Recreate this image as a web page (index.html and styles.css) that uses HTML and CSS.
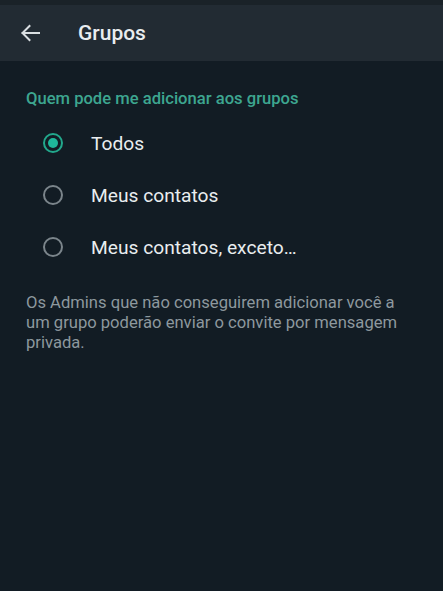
FILE: index.html
```html
<!DOCTYPE html>
<html lang="pt-BR">
<head>
  <meta charset="UTF-8">
  <meta name="viewport" content="width=device-width, initial-scale=1.0">
  <title>Grupos</title>
  <link rel="stylesheet" href="styles.css">
</head>
<body>
  <div class="statusbar"></div>

  <header class="appbar">
    <button class="back" aria-label="Voltar">
      <svg width="20" height="18" viewBox="0 0 20 18">
        <path d="M19 9H2.5M9.5 2L2.5 9l7 7" fill="none" stroke="#d9dee1" stroke-width="2" stroke-linecap="square"/>
      </svg>
    </button>
    <h1>Grupos</h1>
  </header>

  <main class="content">
    <h2 class="section-title">Quem pode me adicionar aos grupos</h2>

    <div class="options">
      <label class="option">
        <span class="radio checked"></span>
        <span class="label">Todos</span>
      </label>
      <label class="option">
        <span class="radio"></span>
        <span class="label">Meus contatos</span>
      </label>
      <label class="option">
        <span class="radio"></span>
        <span class="label">Meus contatos, exceto…</span>
      </label>
    </div>

    <p class="hint">Os Admins que não conseguirem adicionar você a um grupo poderão enviar o convite por mensagem privada.</p>
  </main>
</body>
</html>
```

FILE: styles.css
```css
/* Basic Reset */
* {
  margin: 0;
  padding: 0;
  box-sizing: border-box;
  font-family: Roboto, "Noto Sans", Arial, sans-serif;
}

body {
  min-height: 100vh;
  background: #121c24;
  color: #e9edef;
}

.statusbar {
  height: 5px;
  background: #1a2228;
}

/* Top bar */
.appbar {
  display: flex;
  align-items: center;
  height: 56px;
  padding-left: 20px;
  background: #222b33;
}

.back {
  display: flex;
  border: none;
  background: none;
  cursor: pointer;
}

.appbar h1 {
  margin-left: 38px;
  font-size: 21px;
  font-weight: 500;
  color: #e9edef;
}

/* Settings list */
.content {
  padding: 28px 26px 0;
}

.section-title {
  font-size: 16.6px;
  font-weight: 500;
  line-height: 20px;
  color: #3da690;
}

.options {
  margin-top: 8px;
}

.option {
  display: flex;
  align-items: center;
  height: 52px;
  cursor: pointer;
}

.radio {
  width: 20px;
  height: 20px;
  margin-left: 17px;
  border: 2px solid #7b858b;
  border-radius: 50%;
  display: flex;
  align-items: center;
  justify-content: center;
}

.radio.checked {
  border-color: #22a88c;
}

.radio.checked::after {
  content: "";
  width: 10px;
  height: 10px;
  border-radius: 50%;
  background: #1fb89b;
}

.label {
  margin-left: 28px;
  font-size: 19.2px;
  color: #e9edef;
}

.hint {
  margin-top: 20px;
  font-size: 16.6px;
  line-height: 20px;
  color: #8d989e;
}
```
